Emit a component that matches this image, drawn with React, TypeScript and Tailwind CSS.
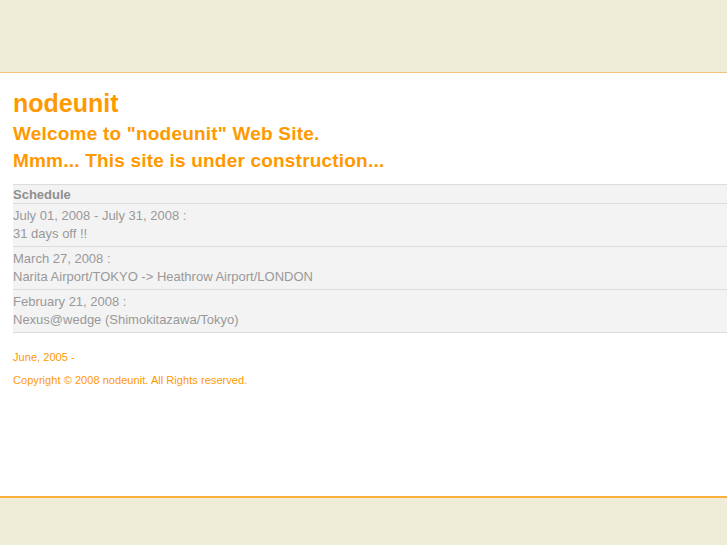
export default function App() {
  const rows = [
    ["July 01, 2008 - July 31, 2008 :", "31 days off !!"],
    ["March 27, 2008 :", "Narita Airport/TOKYO -> Heathrow Airport/LONDON"],
    ["February 21, 2008 :", "Nexus@wedge (Shimokitazawa/Tokyo)"],
  ];

  return (
    <div className="flex min-h-screen flex-col bg-[#efecd8] font-['Liberation_Sans',Arial,sans-serif]">
      <div className="h-[73px] border-b border-[#f7c27a]" />
      <div className="h-[423px] bg-white pl-[13px] pt-[15px]">
        <h1 className="text-[25px] font-bold leading-[30px] text-[#ff9900]">nodeunit</h1>
        <h2 className="mt-[2px] text-[19px] font-bold leading-[27px] tracking-[0.2px] text-[#ff9900]">Welcome to "nodeunit" Web Site.</h2>
        <h2 className="text-[19px] font-bold leading-[27px] tracking-[0.2px] text-[#ff9900]">Mmm... This site is under construction...</h2>

        {/* schedule */}
        <div className="mt-[10px] border-t border-[#dcdcdc] bg-[#f3f3f3] text-[13px] text-[#999999]">
          <div className="border-b border-[#dcdcdc] pt-[1px] font-bold leading-[17px] text-[#8f8f8f]">Schedule</div>
          {rows.map(([date, what]) => (
            <div key={date} className="border-b border-[#dcdcdc] py-[3px] leading-[18px]">
              <div>{date}</div>
              <div>{what}</div>
            </div>
          ))}
        </div>

        <p className="mt-[18px] text-[11px] leading-[13px] tracking-[0.05px] text-[#ff9900]">June, 2005 -</p>
        <p className="mt-[10px] text-[11px] leading-[13px] tracking-[0.05px] text-[#ff9900]">Copyright © 2008 nodeunit. All Rights reserved.</p>
      </div>
      <div className="flex-1 border-t-2 border-[#fbb03b]" />
    </div>
  );
}
